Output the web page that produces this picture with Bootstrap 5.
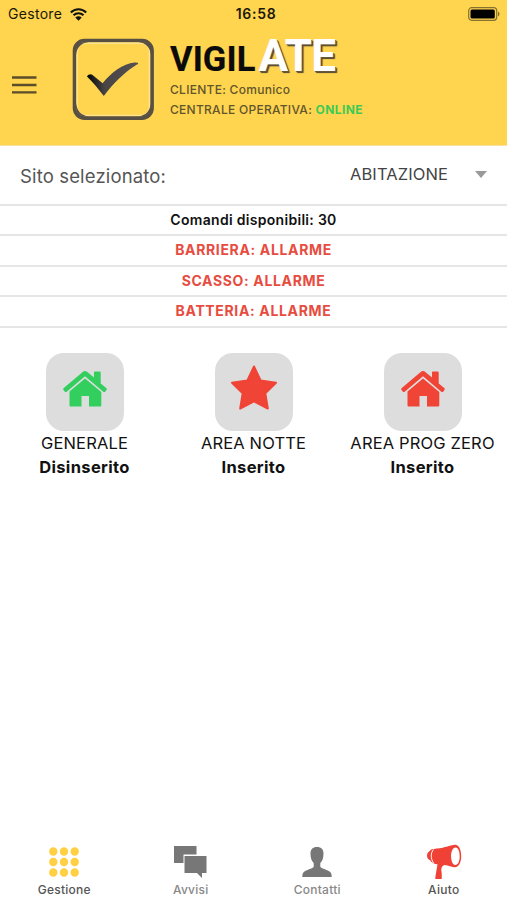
<!DOCTYPE html>
<html lang="it">
<head>
<meta charset="utf-8">
<meta name="viewport" content="width=device-width, initial-scale=1">
<title>Vigilate</title>
<link href="https://cdn.jsdelivr.net/npm/bootstrap@5.3.0/dist/css/bootstrap.min.css" rel="stylesheet">
<style>
body{font-family:Inter,sans-serif;color:#111;height:900px;overflow:hidden}
svg{display:block;flex:none}
.app-header{background:#ffd44f;height:146px;border-bottom:1px solid #f6dfa0}
.status{height:28px;font-size:14px;line-height:28px;color:#1c1808;padding:0 7px 0 8px;letter-spacing:.3px}
.status .clock{font-weight:600;font-size:14px;letter-spacing:.7px;padding-left:4px}
.brand-row{padding-left:12px}
.menu-btn{width:25px;margin:46px 35px 0 0}
.logo{margin-top:9.500px;margin-right:15px}
.brand-name{font-family:"DIN Alternate",Roboto,sans-serif;font-weight:700;height:48px;line-height:48px;color:#0b0b0b}
.brand-name .vig{font-size:34.500px;letter-spacing:.1px;font-weight:700;margin-right:3px;-webkit-text-stroke:.2px #0b0b0b}
.brand-name .ate{font-size:44px;letter-spacing:-.7px;color:#fff;text-shadow:1px 1px 0 #65583a,2px 2px 1px #4e452f}
.meta{font-size:12px;line-height:19.5px;color:#62542d;font-weight:500;letter-spacing:.28px;white-space:nowrap}
.online{color:#3fca55;font-weight:700;letter-spacing:.4px}
.site-row{height:57.500px;padding:0 20px 0 20px}
.site-label{font-size:18.500px;color:#555;letter-spacing:.15px;margin-top:4px}
.site-value{font-size:16.500px;color:#444;letter-spacing:.1px}
.site-value svg{margin-left:27px}
.info-row{height:30.600px;line-height:28px;border-top:2px solid #e6e6e6;font-size:14px;font-weight:600;text-align:center;letter-spacing:.3px}
.alarm{color:#e74c40;font-weight:700;font-size:14px;letter-spacing:.65px}
.info-end{border-top:2px solid #e6e6e6;height:26.700px}
.tile{width:78px;height:78px;border-radius:18px;background:#ddd}
.zone{width:169px;font-size:16.500px;line-height:24.5px;letter-spacing:.15px;white-space:nowrap}
.zone b{font-weight:700;letter-spacing:.35px}
.green{color:#32cf5e}
.red{color:#f04437}
.star{margin-top:12px}
.house-icon{margin-top:18px}
.tabs{height:60px;padding-left:1px}
.tab{width:126.5px;font-size:12px;line-height:16px;letter-spacing:.25px;color:#888;font-weight:500}
.tab.dark{color:#555}
.tab svg{margin-bottom:2px}
</style>
</head>
<body class="d-flex flex-column bg-white m-0">
<svg width="0" height="0" class="d-none">
  <symbol id="house" viewBox="0 0 44 36"><path fill="currentColor" d="M22 0c1 0 1.700.3 2.300.9L31 6.500V1.500c0-.6.300-.9.900-.9h4.900c.6 0 .9.300.9.900V12.500l5.500 4.600c.7.600.8 1.300.3 2l-1.200 1.400c-.6.700-1.300.7-2 .2L22 5.200 3.700 20.700c-.7.500-1.400.5-2-.2L.5 19.100c-.5-.7-.4-1.400.3-2L19.700.9C20.300.3 21 0 22 0ZM22 7.500 38.300 21v13.200c0 .8-.5 1.300-1.300 1.300H26V25h-7.500v10.500H8c-.9 0-1.500-.5-1.500-1.300V20.500Z"/></symbol>
</svg>
<header class="app-header flex-shrink-0">
  <div class="status row g-0">
    <div class="col d-flex align-items-center">Gestore
      <svg class="ms-2" width="17" height="13" viewBox="0 0 17 13" fill="none" stroke="#111" stroke-width="2.100"><path d="M.8 4.500C5.200.2 11.800.2 16.200 4.500M3.500 7.300c2.900-2.700 7.100-2.700 10 0"/><path fill="#111" stroke="none" d="M5.300 9.500c1.900-1.700 4.500-1.700 6.400 0L8.500 12.700Z"/></svg>
    </div>
    <div class="col-auto clock">16:58</div>
    <div class="col d-flex align-items-center justify-content-end">
      <svg width="32" height="14" viewBox="0 0 32 14"><rect x=".7" y=".7" width="28" height="12.600" rx="3" fill="none" stroke="#86702f" stroke-width="1.200"/><rect x="2.500" y="2.500" width="24.300" height="9" rx="1.500" fill="#000"/><path d="M30 4.500c2 1 2 4 0 5Z" fill="#86702f"/></svg>
    </div>
  </div>
  <div class="brand-row d-flex align-items-start">
    <div class="menu-btn"><svg width="25" height="22" viewBox="0 0 25 22" stroke="#5b4d2a" stroke-width="2.300"><path d="M0 3.500h24.500M0 11h24.500M0 18.400h24.500"/></svg></div>
    <svg class="logo" width="83" height="83" viewBox="0 0 83 83">
      <defs><linearGradient id="tick" x1="0" y1="0" x2="1" y2="0"><stop offset="0" stop-color="#050505"/><stop offset=".35" stop-color="#494545"/><stop offset="1" stop-color="#555052"/></linearGradient></defs>
      <rect x="2.500" y="2.500" width="77.600" height="77.600" rx="10" fill="#ffd44f" stroke="#595044" stroke-width="3.600"/>
      <rect x="5.200" y="5.200" width="72.200" height="72.200" rx="8" fill="none" stroke="#ffe391" stroke-width="1.400"/>
      <path fill="#595044" d="M4 13C4 7 7 4 13 4h4C9 5 5 9 4 17ZM79 13c0-6-3-9-9-9h-4c8 1 12 5 13 13ZM4 69c0 6 3 9.500 9 9.500h4C9 77.500 5 73 4 65ZM79 69c0 6-3 9.500-9 9.500h-4c8-1 12-5.500 13-13.500Z"/>
      <path fill="url(#tick)" d="M15 38.500c1-2 4-3 5.500-1.500l10.200 8.200C39 35 51 25.500 62.500 24.600c1.500-.1 3.700.1 3.700.8 0 .6-1 .8-2 1.500C52 34.500 41 45.500 31.800 58 26.500 51 21.500 45 15 38.500Z"/>
    </svg>
    <div>
      <div class="brand-name text-nowrap mt-1"><span class="vig">VIGIL</span><span class="ate">ATE</span></div>
      <div class="meta">CLIENTE: Comunico</div>
      <div class="meta">CENTRALE OPERATIVA: <span class="online">ONLINE</span></div>
    </div>
  </div>
</header>
<main class="flex-grow-1">
  <div class="site-row d-flex align-items-center justify-content-between">
    <div class="site-label">Sito selezionato:</div>
    <div class="site-value d-flex align-items-center">ABITAZIONE<svg width="12" height="7" viewBox="0 0 12 7"><path fill="#999" d="M0 0h12L6 7Z"/></svg></div>
  </div>
  <div class="info-row">Comandi disponibili: 30</div>
  <div class="info-row alarm">BARRIERA: ALLARME</div>
  <div class="info-row alarm">SCASSO: ALLARME</div>
  <div class="info-row alarm">BATTERIA: ALLARME</div>
  <div class="info-end"></div>
  <div class="d-flex">
    <div class="zone d-flex flex-column align-items-center">
      <div class="tile green d-flex justify-content-center"><svg class="house-icon" width="44" height="36"><use href="#house"/></svg></div>
      <div>GENERALE</div><b>Disinserito</b>
    </div>
    <div class="zone d-flex flex-column align-items-center">
      <div class="tile red d-flex justify-content-center"><svg class="star" width="46" height="45" viewBox="0 0 46 45"><path fill="currentColor" stroke="currentColor" stroke-width="2" stroke-linejoin="round" d="m23 1.500 6.600 14L45 17.800 34.300 28.200 36.800 43.500 23 36.300 9.200 43.500 11.700 28.200 1 17.800l15.400-2.300Z"/></svg></div>
      <div>AREA NOTTE</div><b>Inserito</b>
    </div>
    <div class="zone d-flex flex-column align-items-center">
      <div class="tile red d-flex justify-content-center"><svg class="house-icon" width="44" height="36"><use href="#house"/></svg></div>
      <div>AREA PROG ZERO</div><b>Inserito</b>
    </div>
  </div>
</main>
<nav class="tabs d-flex flex-shrink-0">
  <div class="tab dark d-flex flex-column align-items-center">
    <svg width="30" height="40" viewBox="0 0 30 40" fill="#ffd044"><circle cx="4.300" cy="11.500" r="4.200"/><circle cx="15" cy="11.500" r="4.200"/><circle cx="25.700" cy="11.500" r="4.200"/><circle cx="4.300" cy="22" r="4.200"/><circle cx="15" cy="22" r="4.200"/><circle cx="25.700" cy="22" r="4.200"/><circle cx="4.300" cy="32.500" r="4.200"/><circle cx="15" cy="32.500" r="4.200"/><circle cx="25.700" cy="32.500" r="4.200"/></svg>
    Gestione
  </div>
  <div class="tab d-flex flex-column align-items-center">
    <svg width="33" height="40" viewBox="0 0 33 40" fill="#777"><path d="M0 6h22.500v8.500H9.500V23H0Z"/><path d="M10.500 16H32.500v17H28v5l-5-5H10.500Z"/></svg>
    Avvisi
  </div>
  <div class="tab d-flex flex-column align-items-center">
    <svg width="30" height="40" viewBox="0 0 30 40" fill="#777"><path d="M15 7c4.500 0 6.500 2.500 6.500 6.500 0 4.500-1 7.500-3.200 9.500v4c1.500 1.700 7.700 3 9.700 4.800 1.300 1.200 1.700 2.900 1.700 5.200H.3c0-2.300.4-4 1.700-5.200 2-1.800 8.200-3.100 9.700-4.800v-4C9.500 21 8.500 18 8.500 13.500 8.500 9.500 10.500 7 15 7Z"/></svg>
    Contatti
  </div>
  <div class="tab dark d-flex flex-column align-items-center">
    <svg width="36" height="40" viewBox="0 0 36 40"><path fill="#ef4136" d="M28.500 4.800c4.500-.6 6.700 5.200 6.700 11.500 0 6-2.400 11-6.200 10.900-3-.1-6.500-1.700-10.500-2.200-3 1-3.500 4-3 6.500.3 2.500.4 4.500.2 7.500H9.200c.5-5 1.500-9.500 2.300-14.800-1.700 0-3-.3-4-.9C5.500 22.500 4.500 21 4 20c-1.600-.3-3-2-3-4.300 0-2 1-3.700 2.400-4.500.7-1.300 2-2.200 4.100-2.300C17 8.500 22 6 28.500 4.800Z"/><path fill="#fff" d="M29.500 7.500c3 0 4.200 4.500 4.200 8.800 0 4.800-1.700 8.700-4.300 8.700-3 0-4.300-4.500-4.300-9 0-4.300 1.600-8.500 4.400-8.500Z"/><path d="M7.500 9.500c-3 3.500-3 9 0 13.500" fill="none" stroke="#fff" stroke-width="1"/></svg>
    Aiuto
  </div>
</nav>
<script src="https://cdn.jsdelivr.net/npm/bootstrap@5.3.0/dist/js/bootstrap.bundle.min.js"></script>
</body>
</html>
